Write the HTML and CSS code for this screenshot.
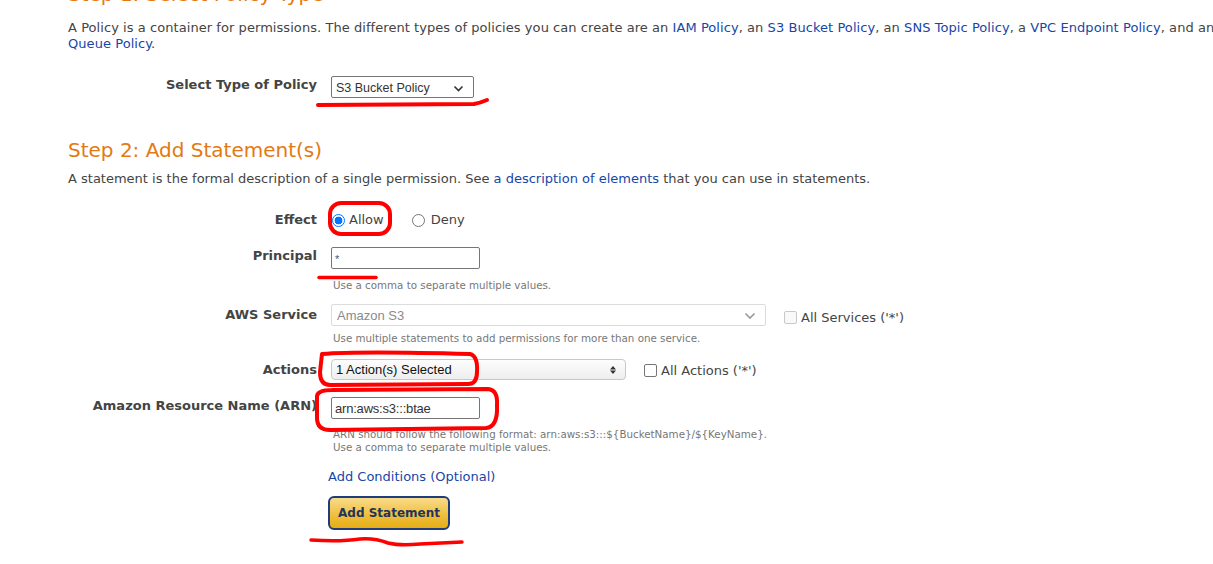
FILE: index.html
```html
<!DOCTYPE html>
<html>
<head>
<meta charset="utf-8">
<link rel="stylesheet" href="styles.css">
</head>
<body>
<div class="page">
  <h2 class="step step1">Step 1: Select Policy Type</h2>
  <p class="intro">A Policy is a container for permissions. The different types of policies you can create are an <a href="#">IAM Policy</a>, an <a href="#">S3 Bucket Policy</a>, an <a href="#">SNS Topic Policy</a>, a <a href="#">VPC Endpoint Policy</a>, and an <a href="#">SQS</a> <a href="#">Queue Policy</a>.</p>

  <div class="form-row row-type">
    <div class="label">Select Type of Policy</div>
    <div class="control">
      <div class="select sel-type"><span>S3 Bucket Policy</span>
        <svg width="11" height="7" viewBox="0 0 11 7"><path d="M1.5 1.5 L5.5 5.5 L9.5 1.5" fill="none" stroke="#333" stroke-width="1.6"/></svg>
      </div>
    </div>
  </div>

  <h2 class="step step2">Step 2: Add Statement(s)</h2>
  <p class="intro2">A statement is the formal description of a single permission. See <a href="#">a description of elements</a> that you can use in statements.</p>

  <div class="form-row row-effect">
    <div class="label">Effect</div>
    <div class="control radios">
      <span class="radio checked"></span><span class="rtext">Allow</span>
      <span class="radio deny"></span><span class="rtext">Deny</span>
    </div>
  </div>

  <div class="form-row row-principal">
    <div class="label">Principal</div>
    <div class="control">
      <div class="input"><span class="star">*</span></div>
      <div class="help help-principal">Use a comma to separate multiple values.</div>
    </div>
  </div>

  <div class="form-row row-service">
    <div class="label">AWS Service</div>
    <div class="control">
      <div class="inline">
        <div class="select sel-service"><span>Amazon S3</span>
          <svg width="12" height="8" viewBox="0 0 12 8"><path d="M1.5 1.5 L6 6 L10.5 1.5" fill="none" stroke="#999" stroke-width="1.6"/></svg>
        </div>
        <span class="check disabled"></span><span class="ctext">All Services ('*')</span>
      </div>
      <div class="help help-service">Use multiple statements to add permissions for more than one service.</div>
    </div>
  </div>

  <div class="form-row row-actions">
    <div class="label">Actions</div>
    <div class="control">
      <div class="inline">
        <div class="select sel-actions"><span>1 Action(s) Selected</span>
          <svg width="8" height="12" viewBox="0 0 8 12"><path d="M4 2 L7 5.5 L1 5.5 Z M4 10 L7 6.5 L1 6.5 Z" fill="#333"/></svg>
        </div>
        <span class="check"></span><span class="ctext">All Actions ('*')</span>
      </div>
    </div>
  </div>

  <div class="form-row row-arn">
    <div class="label">Amazon Resource Name (ARN)</div>
    <div class="control">
      <div class="input"><span class="arn">arn:aws:s3:::btae</span></div>
      <div class="help help-arn">ARN should follow the following format: arn:aws:s3:::${BucketName}/${KeyName}.<br>Use a comma to separate multiple values.</div>
    </div>
  </div>

  <div class="form-row row-cond">
    <div class="label"></div>
    <div class="control">
      <a href="#" class="cond">Add Conditions (Optional)</a>
      <div><button class="btn">Add Statement</button></div>
    </div>
  </div>

  <svg class="marks" width="1213" height="564" viewBox="0 0 1213 564">
    <g fill="none" stroke="#ff0000" stroke-linecap="round" stroke-linejoin="round">
      <path d="M318 105 L474 104 Q480 103 487 100" stroke-width="4"/>
      <rect x="330" y="203" width="60" height="31" rx="11" stroke-width="4"/>
      <path d="M319 277.5 L376 277.5" stroke-width="3.5"/>
      <path d="M322 354 Q360 351 470 354 Q478 356 477 372 Q477 384 468 384 L330 385 Q320 385 320 372 Z" stroke-width="4"/>
      <path d="M332 390 L488 389 Q498 390 497 405 Q498 427 486 428 L330 430 Q317 430 317 418 L317 396 Q318 390 332 390" stroke-width="4"/>
      <path d="M311 540 Q340 542 360 539 Q375 538 388 543 Q400 546 420 544 L462 542" stroke-width="3.5"/>
    </g>
  </svg>
</div>
</body>
</html>
```

FILE: styles.css
```css
* { box-sizing: border-box; }
html, body { margin: 0; padding: 0; background: #fff; }
body {
  font-family: "DejaVu Sans", Verdana, sans-serif;
  font-size: 13px;
  color: #444;
  overflow: hidden;
  width: 1213px;
  height: 564px;
}
.page {
  position: relative;
  display: flow-root;
  padding-left: 68px;
  width: 1213px;
  height: 564px;
  overflow: hidden;
}
a { color: #1646a8; text-decoration: none; }
.step {
  font-weight: normal;
  color: #e47911;
  font-size: 20px;
  line-height: 24px;
  margin: 0;
}
.step1 { margin-top: -18px; }
.intro {
  margin: 14px 0 0 0;
  line-height: 16px;
  width: 1190px;
  letter-spacing: 0.06px;
}
.intro2 { margin: 9px 0 0 0; line-height: 16px; }
.step2 { margin-top: 40px; }

.form-row {
  display: grid;
  grid-template-columns: 249px auto;
  column-gap: 14px;
  align-items: start;
}
.label {
  font-weight: bold;
  text-align: right;
  line-height: 22px;
  white-space: nowrap;
}
.control { display: flex; flex-direction: column; align-items: flex-start; }
.row-type { margin-top: 24px; }
.row-type .label { margin-top: -2px; }
.row-effect { margin-top: 22px; }
.row-principal { margin-top: 16px; }
.row-principal .label { margin-top: -2px; }
.row-service { margin-top: 12px; }
.row-actions { margin-top: 14px; }
.row-arn { margin-top: 16px; }
.row-arn .label { margin-top: -2px; }
.row-cond { margin-top: 15px; }

.select {
  display: flex;
  align-items: center;
  justify-content: space-between;
  height: 22px;
  background: #fff;
  font-family: "Liberation Sans", Arial, sans-serif;
  font-size: 13px;
  color: #222;
}
.sel-type {
  width: 143px;
  border: 1px solid #767676;
  border-radius: 2px;
  padding: 2px 9px 0 4px;
  font-size: 12.5px;
  color: #333;
}
.sel-service {
  width: 435px;
  border: 1px solid #dcdcdc;
  border-radius: 2px;
  padding: 1px 9px 0 5px;
  color: #8a8a8a;
}
.sel-actions {
  width: 295px;
  height: 21px;
  border: 1px solid #c8c8c8;
  border-radius: 4px;
  padding: 0 8px 0 4px;
  background: linear-gradient(#fdfdfd, #eeeeee);
  color: #111;
}
.inline { display: flex; align-items: center; }
.check {
  display: inline-block;
  width: 13px;
  height: 13px;
  border: 1px solid #767676;
  border-radius: 2px;
  background: #fff;
  margin: 2px 4px 0 18px;
}
.check.disabled { border-color: #c9c9c9; background: #f9f9f9; margin-top: 5px; }
.ctext { margin-top: 1px; }
.row-service .ctext { margin-top: 4px; }

.radios { flex-direction: row; align-items: center; height: 22px; }
.radio {
  display: inline-block;
  width: 13px;
  height: 13px;
  border: 1px solid #767676;
  border-radius: 50%;
  margin-left: 1px;
  margin-right: 4px;
  background: #fff;
}
.radio.checked {
  border: 1px solid #0075ff;
  background: radial-gradient(circle, #0075ff 0 3.6px, #fff 4.2px 100%);
  margin-left: 1px;
}
.radio.deny { margin-left: 28px; margin-right: 6px; }
.rtext { line-height: 22px; }

.input {
  width: 149px;
  height: 22px;
  border: 1px solid #767676;
  border-radius: 2px;
  display: flex;
  align-items: center;
  padding-left: 3px;
  font-family: "Liberation Sans", Arial, sans-serif;
  font-size: 13px;
  color: #222;
}
.star { font-size: 11px; color: #555; margin-top: 2px; }
.arn { color: #333; letter-spacing: -0.2px; }

.help {
  font-size: 10.3px;
  line-height: 13px;
  color: #777;
  padding-left: 2px;
  white-space: nowrap;
}
.help-principal { margin-top: 10px; }
.help-service { margin-top: 6px; }
.help-arn { margin-top: 9px; }

.cond { margin-left: -3px; line-height: 16px; }
.btn {
  margin-top: 11px;
  margin-left: -3px;
  width: 122px;
  height: 34px;
  border: 2px solid #1e3d7a;
  border-radius: 6px;
  background: linear-gradient(#f9dc8a, #eebd3a 60%, #e6ad14);
  font-family: "DejaVu Sans", Verdana, sans-serif;
  font-weight: bold;
  font-size: 12px;
  color: #22335e;
  padding: 0;
}
.marks {
  position: absolute;
  left: 0;
  top: 0;
  pointer-events: none;
}
```
